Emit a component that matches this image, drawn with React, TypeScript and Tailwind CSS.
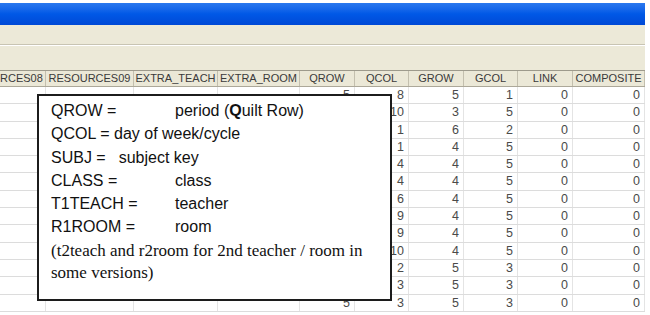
import React from "react";

const widths = [
  "w-[46px]",
  "w-[88px]",
  "w-[84px]",
  "w-[82px]",
  "w-[55px]",
  "w-[54px]",
  "w-[55px]",
  "w-[54px]",
  "w-[55px]",
  "w-[72px]",
];

const headers = [
  "RCES08",
  "RESOURCES09",
  "EXTRA_TEACH",
  "EXTRA_ROOM",
  "QROW",
  "QCOL",
  "GROW",
  "GCOL",
  "LINK",
  "COMPOSITE",
];

// qrow (only the ones peeking out from under the note), qcol, grow, gcol, link, composite
const rows: (number | string)[][] = [
  [5, 8, 5, 1, 0, 0],
  ["", 10, 3, 5, 0, 0],
  ["", 1, 6, 2, 0, 0],
  ["", 1, 4, 5, 0, 0],
  ["", 4, 4, 5, 0, 0],
  ["", 4, 4, 5, 0, 0],
  ["", 6, 4, 5, 0, 0],
  ["", 9, 4, 5, 0, 0],
  ["", 9, 4, 5, 0, 0],
  ["", 10, 4, 5, 0, 0],
  ["", 2, 5, 3, 0, 0],
  ["", 3, 5, 3, 0, 0],
  [5, 3, 5, 3, 0, 0],
];

function Legend() {
  return (
    <div className="absolute left-[37px] top-[94px] w-[355px] h-[207px] border-2 border-[#1c1c1c] bg-white pl-[12px] pt-[3px] text-[#111]">
      <div className="font-['Liberation_Sans',Arial,sans-serif] text-[16px] leading-[23.3px]">
        <div className="flex">
          <span className="w-[124px]">QROW =</span>
          <span>
            period (<b>Q</b>uilt Row)
          </span>
        </div>
        <div>QCOL = day of week/cycle</div>
        <div className="flex">
          <span>SUBJ =</span>
          <span className="ml-[13px]">subject key</span>
        </div>
        <div className="flex">
          <span className="w-[124px]">CLASS =</span>
          <span>class</span>
        </div>
        <div className="flex">
          <span className="w-[124px]">T1TEACH =</span>
          <span>teacher</span>
        </div>
        <div className="flex">
          <span className="w-[124px]">R1ROOM =</span>
          <span>room</span>
        </div>
      </div>
      <div className="font-['Liberation_Serif','Times_New_Roman',serif] text-[17px] leading-[22px] mt-[1px]">
        (t2teach and r2room for 2nd teacher / room in
        <br />
        some versions)
      </div>
    </div>
  );
}

export default function App() {
  return (
    <div className="relative w-[650px] h-[315px] overflow-hidden bg-white font-['Liberation_Sans',Arial,sans-serif]">
      <div className="w-[645px] mt-[3px]">
        <div className="h-[22px] bg-gradient-to-b from-[#2a78ee] via-[#0058e6] to-[#0049d6]" />
        <div className="h-[20px] bg-[#ece9d8] border-b border-[#c8c4b3]" />
        <div className="h-[26px] bg-[#ece9d8] border-t border-white border-b border-b-[#9d9a8c]" />
        <div className="flex h-[16px] bg-[#ebe8d7] border-b border-[#aca899]">
          {headers.map((h, i) => (
            <div
              key={h}
              className={`${widths[i]} shrink-0 border-r border-[#c3bfae] text-[11px] leading-[15px] text-[#3a3a3a] ${
                i === 0 ? "text-left" : "text-center"
              } overflow-hidden whitespace-nowrap`}
            >
              {h}
            </div>
          ))}
        </div>
        {rows.map((r, ri) => (
          <div key={ri} className="flex h-[17.3px] border-b border-[#dcdcdc]">
            {widths.map((w, ci) => (
              <div
                key={ci}
                className={`${w} shrink-0 border-r border-[#e4e4e4] text-right pr-[4px] text-[12.5px] leading-[16px] text-[#4a4a4a]`}
              >
                {ci >= 4 ? r[ci - 4] : ""}
              </div>
            ))}
          </div>
        ))}
      </div>
      <Legend />
    </div>
  );
}
